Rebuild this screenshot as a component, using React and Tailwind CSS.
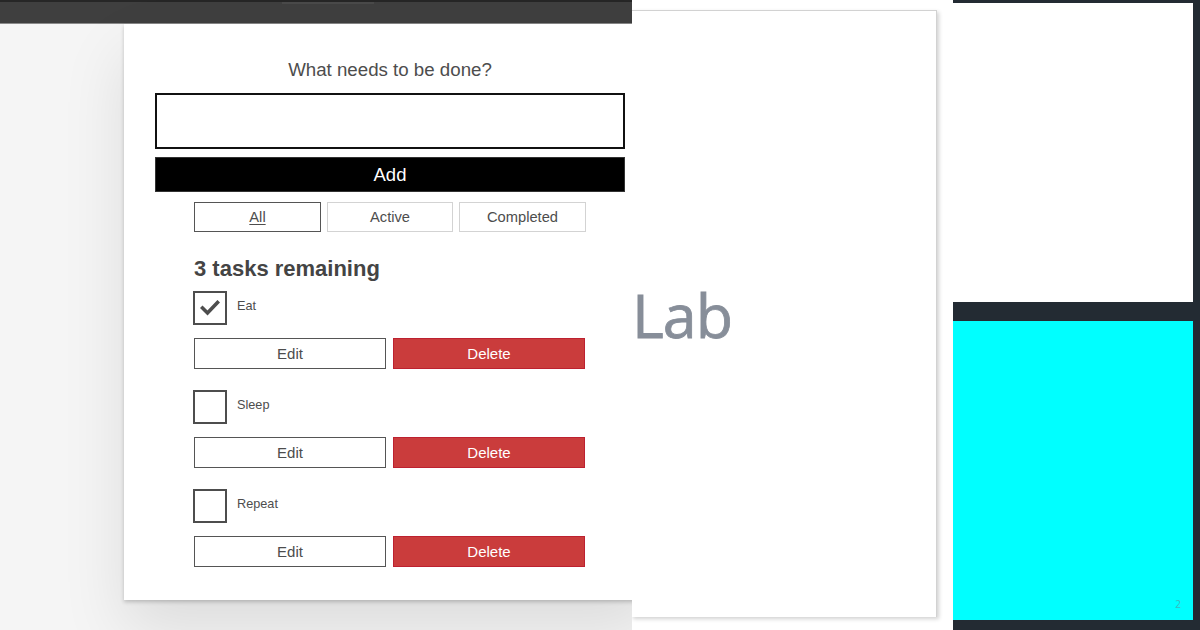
import React from "react";

const tasks = [
    { id: 1, name: "Eat", completed: true },
    { id: 2, name: "Sleep", completed: false },
    { id: 3, name: "Repeat", completed: false },
];

function Checkbox({ checked }) {
    return (
        <div className="w-[34px] h-[34px] border-2 border-[#4d4d4d] bg-white flex items-center justify-center shrink-0">
            {checked && (
                <svg width="20" height="16" viewBox="0 0 20 16">
                    <polyline points="2.5,8 7.5,13 17.5,2.5" fill="none" stroke="#4d4d4d" strokeWidth="3.6" strokeLinecap="square" />
                </svg>
            )}
        </div>
    );
}

function TodoItem({ task }) {
    return (
        <li className="flex flex-col">
            <div className="flex items-center gap-[9px] -ml-[1px]">
                <Checkbox checked={task.completed} />
                <span className="text-[12.7px] text-[#4d4d4d] -mt-[2px] ml-[1px]">{task.name}</span>
            </div>
            <div className="flex gap-[7px] mt-[13px]">
                <button className="w-[192px] h-[31px] pt-[2px] border-[1.5px] border-[#555] bg-white text-[15px] text-[#4d4d4d]">Edit</button>
                <button className="w-[192px] h-[31px] pt-[2px] border-[1.5px] border-[#bd2130] bg-[#ca3c3c] text-[15px] text-white">Delete</button>
            </div>
        </li>
    );
}

export default function App() {
    return (
        <div className="flex w-[1200px] h-[630px] overflow-hidden bg-white" style={{ fontFamily: '"Liberation Sans", Arial, sans-serif' }}>
            {/* left window: todo app */}
            <div className="w-[632px] shrink-0 flex flex-col bg-[#f5f5f5] overflow-hidden">
                <div className="h-[24px] shrink-0 bg-[#3f3f3f] border-t-2 border-t-[#262626] border-b border-b-[#8a8a8a] flex">
                    <div className="ml-[282px] w-[92px] h-[2px] bg-[#4a4a4a]" />
                </div>
                <div className="pl-[124px]">
                    <div className="w-[532px] h-[576px] bg-white pt-[34px] px-[31px] shadow-[0_2px_4px_0_rgba(0,0,0,0.2),0_30px_60px_0_rgba(0,0,0,0.1)] text-[#4d4d4d]">
                        <h2 className="text-[18.7px] leading-[23px] text-center">What needs to be done?</h2>
                        <div className="mt-[12px] h-[56px] border-2 border-[#111] bg-white" />
                        <button className="mt-[8px] w-full h-[35px] pt-[1px] bg-black border border-[#333] text-white text-[18.5px]">Add</button>
                        <div className="mt-[10px] flex justify-center gap-[6px]">
                            <button className="w-[127px] h-[30px] pt-[1px] border-[1.5px] border-[#555] text-[14.7px] underline underline-offset-2">All</button>
                            <button className="w-[126px] h-[30px] pt-[1px] border border-[#d3d3d3] text-[14.7px]">Active</button>
                            <button className="w-[127px] h-[30px] pt-[1px] border border-[#d3d3d3] text-[14.7px]">Completed</button>
                        </div>
                        <div className="w-[392px] mx-auto">
                            <h2 className="mt-[24px] text-[22px] leading-[26px] font-bold text-[#444]">3 tasks remaining</h2>
                            <ul className="mt-[9px] flex flex-col gap-[21px]">
                                {tasks.map((t) => (
                                    <TodoItem key={t.id} task={t} />
                                ))}
                            </ul>
                        </div>
                    </div>
                </div>
            </div>

            {/* middle window: slide */}
            <div className="w-[321px] shrink-0 bg-white overflow-hidden pt-[10px]">
                <div className="w-[306px] h-[607px] bg-white border-t border-r border-[#d2d2d2] shadow-[2px_2px_4px_rgba(0,0,0,0.18)] -ml-[1px]">
                    <div className="mt-[273px] ml-[1px] text-[61px] leading-[61px] tracking-[-1px] text-[#878e99]" style={{ fontFamily: '"Open Sans", "Noto Sans", sans-serif', WebkitTextStroke: "0.8px #878e99" }}>
                        Lab
                    </div>
                </div>
            </div>

            {/* right window: panels */}
            <div className="w-[247px] shrink-0 bg-[#232b33] pt-[3px] flex flex-col gap-[19px]">
                <div className="w-[240px] h-[299px] bg-white" />
                <div className="w-[240px] h-[299px] bg-[#00ffff] flex items-end justify-end pr-[12px] pb-[8px]">
                    <span className="text-[10px] text-[#3bb8c0]" style={{ fontFamily: '"Open Sans", sans-serif' }}>2</span>
                </div>
            </div>
        </div>
    );
}
